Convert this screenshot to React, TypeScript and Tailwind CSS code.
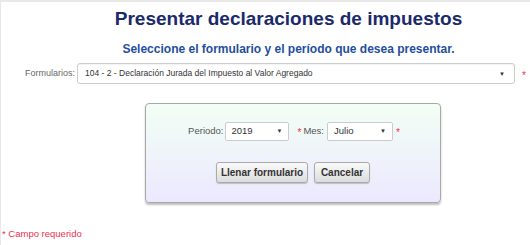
import React from "react";

function Caret() {
  return <span className="text-[6px] text-[#333] leading-none">▼</span>;
}

function Req() {
  return <span className="text-[10px] text-[#f0304e] leading-none">*</span>;
}

export default function App() {
  return (
    <div className="w-[530px] h-[245px] bg-white border-t-2 border-l border-[#e8e8e8] font-['Liberation_Sans',Arial,sans-serif] flex flex-col">
      <h1 className="text-center text-[19px] font-bold text-[#1b2a6b] mt-[6px] leading-[22px] pl-[46px]">
        Presentar declaraciones de impuestos
      </h1>
      <h2 className="text-center text-[12px] font-bold text-[#1f4e9e] mt-[12px] leading-[14px] pl-[46px]">
        Seleccione el formulario y el período que desea presentar.
      </h2>

      <div className="flex items-center mt-[7px] h-[21px]">
        <label className="text-[9px] text-[#666] ml-[24px] w-[52px] whitespace-nowrap">Formularios:</label>
        <div className="w-[438px] h-[21px] border border-[#ccc] rounded-[3px] flex items-center justify-between pl-[7px] pr-[9px] bg-white shadow-[inset_0_1px_1px_rgba(0,0,0,0.05)]">
          <span className="text-[8.5px] text-[#333]">104 - 2 - Declaración Jurada del Impuesto al Valor Agregado</span>
          <Caret />
        </div>
        <span className="ml-[7px]"><Req /></span>
      </div>

      <div className="ml-[144px] mt-[19px] w-[296px] h-[100px] rounded-[4px] border border-[#a8a8a8] shadow-[0_2px_2px_rgba(0,0,0,0.25)] bg-gradient-to-b from-[#f2fff4] to-[#ece8ff] flex flex-col items-center">
        <div className="flex items-center mt-[15px] ml-[2px]">
          <span className="text-[9.5px] text-[#555] mr-[2px]">Periodo:</span>
          <div className="w-[64px] h-[19px] border border-[#ccc] rounded-[2px] bg-white flex items-center justify-between pl-[5px] pr-[6px]">
            <span className="text-[9.5px] text-[#333]">2019</span>
            <Caret />
          </div>
          <span className="ml-[8px] mr-[2px]"><Req /></span>
          <span className="text-[9.5px] text-[#555] mr-[3px]">Mes:</span>
          <div className="w-[66px] h-[19px] border border-[#ccc] rounded-[2px] bg-white flex items-center justify-between pl-[6px] pr-[6px]">
            <span className="text-[9.5px] text-[#333]">Julio</span>
            <Caret />
          </div>
          <span className="ml-[3px]"><Req /></span>
        </div>
        <div className="flex gap-[6px] mt-[19px]">
          <button className="w-[92px] h-[21px] rounded-[3px] border border-[#aaa] bg-gradient-to-b from-[#fafafa] to-[#dcdcdc] text-[10px] font-bold text-[#333] shadow-[0_1px_1px_rgba(0,0,0,0.2)]">
            Llenar formulario
          </button>
          <button className="w-[56px] h-[21px] rounded-[3px] border border-[#aaa] bg-gradient-to-b from-[#fafafa] to-[#dcdcdc] text-[10px] font-bold text-[#333] shadow-[0_1px_1px_rgba(0,0,0,0.2)]">
            Cancelar
          </button>
        </div>
      </div>

      <div className="mt-[26px] text-[9.5px] text-[#f0304e] leading-none pl-[1px]">* Campo requerido</div>
    </div>
  );
}
